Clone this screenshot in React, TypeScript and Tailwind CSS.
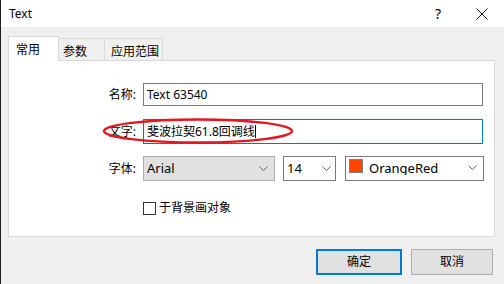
import React from "react";

const Chevron = () => (
  <svg width="9" height="6" viewBox="0 0 9 6" className="shrink-0">
    <polyline points="0.5,0.5 4.5,4.5 8.5,0.5" fill="none" stroke="#606060" strokeWidth="1" />
  </svg>
);

export default function App() {
  const font = { fontFamily: '"Noto Sans", "Noto Sans CJK SC", sans-serif' };
  return (
    <div
      className="relative w-[504px] h-[284px] overflow-hidden bg-[#f0f0f0] text-[12px] text-black border-l border-[#1e1e1e] flex flex-col"
      style={font}
    >
      {/* title bar */}
      <div className="h-[27px] bg-white flex items-center shrink-0">
        <span className="ml-[8px] leading-none">Text</span>
        <span className="ml-auto mr-[35px] text-[14px] leading-none">?</span>
        <svg width="12" height="12" viewBox="0 0 12 12" className="mr-[16px]">
          <line x1="0.5" y1="0.5" x2="11.5" y2="11.5" stroke="#111" strokeWidth="1" />
          <line x1="11.5" y1="0.5" x2="0.5" y2="11.5" stroke="#111" strokeWidth="1" />
        </svg>
      </div>

      {/* tabs */}
      <div className="ml-[7px] mt-[9px] h-[24px] flex items-end relative z-10">
        <div className="w-[51px] h-[25px] -mb-[1px] bg-white border border-b-0 border-[#d9d9d9] flex items-start pt-[4px] pl-[7px]">
          常用
        </div>
        <div className="w-[46px] h-[22px] border-t border-r border-[#d9d9d9] flex items-start pt-[4px] pl-[4px]">
          参数
        </div>
        <div className="w-[58px] h-[22px] border-t border-r border-[#d9d9d9] flex items-start pt-[4px] pl-[6px]">
          应用范围
        </div>
      </div>

      {/* panel */}
      <div className="ml-[7px] w-[487px] h-[177px] bg-white border border-[#d9d9d9] flex flex-col">
        <div className="mt-[22px] flex items-center">
          <span className="w-[127px] text-right">名称:</span>
          <div className="ml-[7px] w-[340px] h-[23px] border border-[#7a7a7a] flex items-center pl-[3px]">
            Text 63540
          </div>
        </div>
        <div className="mt-[13px] flex items-center">
          <span className="w-[127px] text-right">文字:</span>
          <div className="ml-[7px] w-[340px] h-[25px] border border-[#0078d7] flex items-center pl-[3px]">
            斐波拉契61.8回调线
            <span className="w-[1px] h-[13px] bg-black" />
          </div>
        </div>
        <div className="mt-[12px] flex items-center">
          <span className="w-[127px] text-right">字体:</span>
          <div className="ml-[7px] w-[132px] h-[25px] bg-[#e1e1e1] border border-[#adadad] flex items-center pl-[3px] pr-[6px] justify-between">
            <span className="text-[13px]">Arial</span>
            <Chevron />
          </div>
          <div className="ml-[8px] w-[53px] h-[25px] bg-white border border-[#7a7a7a] flex items-center pl-[3px] pr-[4px] justify-between">
            <span className="text-[13px]">14</span>
            <Chevron />
          </div>
          <div className="ml-[9px] w-[139px] h-[25px] bg-white border border-[#7a7a7a] flex items-start pl-[3px] pr-[6px]">
            <span className="mt-[2px] w-[14px] h-[14px] bg-[#ff4500] border border-[#808080] shrink-0" />
            <span className="ml-[6px] mt-[3px] h-[15px] overflow-hidden leading-[16px] text-[13px]">OrangeRed</span>
            <span className="ml-auto mt-[8px]">
              <Chevron />
            </span>
          </div>
        </div>
        <div className="mt-[18px] flex items-center ml-[134px]">
          <span className="w-[13px] h-[13px] border border-[#333] bg-white" />
          <span className="ml-[3px]">于背景画对象</span>
        </div>
      </div>

      {/* buttons */}
      <div className="mt-[12px] flex items-center">
        <div className="ml-[315px] w-[86px] h-[26px] bg-[#e1e1e1] border-2 border-[#0078d7] flex items-center justify-center">
          确定
        </div>
        <div className="ml-[9px] w-[82px] h-[26px] bg-[#e1e1e1] border border-[#adadad] flex items-center justify-center">
          取消
        </div>
      </div>

      {/* red ellipse annotation */}
      <svg className="absolute left-[99px] top-[115px] pointer-events-none" width="198" height="32" viewBox="0 0 198 32">
        <ellipse cx="98" cy="16" rx="94" ry="11.5" fill="none" stroke="#e3151d" strokeWidth="2.5" />
      </svg>
    </div>
  );
}
